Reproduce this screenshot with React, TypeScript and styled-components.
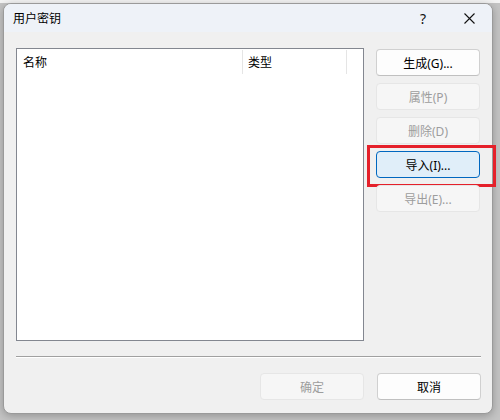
import React from "react";
import styled, { createGlobalStyle } from "styled-components";

const Global = createGlobalStyle`
  html, body { margin: 0; padding: 0; }
  body {
    width: 500px;
    height: 420px;
    overflow: hidden;
    background: linear-gradient(#f3f3f3 0 3px, #c4c4c4 3px);
    font-family: "Noto Sans", "Noto Sans CJK SC", sans-serif;
    font-size: 12px;
    color: #000;
  }
`;

const Dialog = styled.div`
  margin: 3px 0 0 3px;
  width: 490px;
  height: 411px;
  box-sizing: border-box;
  border: 1px solid #9a9a9a;
  border-radius: 8px;
  background: #f0f0f0;
  display: flex;
  flex-direction: column;
  box-shadow: 0 2px 8px rgba(0, 0, 0, 0.25);
`;

const TitleBar = styled.div`
  height: 28px;
  background: #eef2f8;
  border-radius: 7px 7px 0 0;
  display: flex;
  align-items: center;
  padding-left: 9px;
  flex-shrink: 0;
`;

const Title = styled.div`
  flex: 1;
  font-size: 12px;
  line-height: 1;
  margin-top: 1px;
`;

const CaptionButton = styled.div`
  width: 46px;
  height: 28px;
  display: flex;
  align-items: center;
  justify-content: center;
  font-size: 14px;
  color: #111;
`;

const Body = styled.div`
  flex: 1;
  display: flex;
  flex-direction: column;
  padding: 16px 11px 0 12px;
`;

const MainRow = styled.div`
  display: flex;
  gap: 12px;
`;

const ListBox = styled.div`
  width: 348px;
  height: 293px;
  box-sizing: border-box;
  border: 1px solid #838790;
  background: #fff;
`;

const Header = styled.div`
  display: flex;
  height: 26px;
  align-items: stretch;
`;

const HeaderCell = styled.div<{ $w: number; $pad: number }>`
  width: ${(p) => p.$w}px;
  box-sizing: border-box;
  padding-left: ${(p) => p.$pad}px;
  display: flex;
  align-items: center;
  border-right: 1px solid #e5e5e5;
  margin: 1px 0 1px 0;
`;

const ButtonColumn = styled.div`
  display: flex;
  flex-direction: column;
  gap: 7px;
  margin-top: 1px;
`;

const Btn = styled.div<{ $disabled?: boolean; $focused?: boolean; $w?: number }>`
  position: relative;
  width: ${(p) => p.$w ?? 104}px;
  height: 27px;
  box-sizing: border-box;
  border-radius: 4px;
  display: flex;
  align-items: center;
  justify-content: center;
  font-size: 12px;
  border: 1px solid
    ${(p) => (p.$focused ? "#0067c0" : p.$disabled ? "#e6e6e6" : "#d0d0d0")};
  background: ${(p) => (p.$focused ? "#e0eef9" : p.$disabled ? "#f6f6f6" : "#fdfdfd")};
  color: ${(p) => (p.$disabled ? "#9d9d9d" : "#000")};
  border-bottom-color: ${(p) =>
    p.$focused ? "#0067c0" : p.$disabled ? "#e6e6e6" : "#c0c0c0"};
`;

const RedMark = styled.div`
  position: absolute;
  left: -10px;
  top: -7px;
  width: 129px;
  height: 42px;
  box-sizing: border-box;
  border: 3px solid #e5202a;
  pointer-events: none;
`;

const Separator = styled.div`
  margin-top: 15px;
  height: 1px;
  background: #a0a0a0;
  border-bottom: 1px solid #fff;
`;

const Footer = styled.div`
  margin-top: 15px;
  display: flex;
  justify-content: flex-end;
  gap: 13px;
`;

const CloseIcon = () => (
  <svg width="11" height="11" viewBox="0 0 11 11">
    <path d="M0.5 0.5 L10.5 10.5 M10.5 0.5 L0.5 10.5" stroke="#111" strokeWidth="1.1" fill="none" />
  </svg>
);

export default function App() {
  return (
    <>
      <Global />
      <Dialog>
        <TitleBar>
          <Title>用户密钥</Title>
          <CaptionButton>?</CaptionButton>
          <CaptionButton>
            <CloseIcon />
          </CaptionButton>
        </TitleBar>
        <Body>
          <MainRow>
            <ListBox>
              <Header>
                <HeaderCell $w={226} $pad={6}>名称</HeaderCell>
                <HeaderCell $w={104} $pad={5}>类型</HeaderCell>
              </Header>
            </ListBox>
            <ButtonColumn>
              <Btn>生成(G)...</Btn>
              <Btn $disabled>属性(P)</Btn>
              <Btn $disabled>删除(D)</Btn>
              <Btn $focused>
                导入(I)...
                <RedMark />
              </Btn>
              <Btn $disabled>导出(E)...</Btn>
            </ButtonColumn>
          </MainRow>
          <Separator />
          <Footer>
            <Btn $disabled>确定</Btn>
            <Btn>取消</Btn>
          </Footer>
        </Body>
      </Dialog>
    </>
  );
}
